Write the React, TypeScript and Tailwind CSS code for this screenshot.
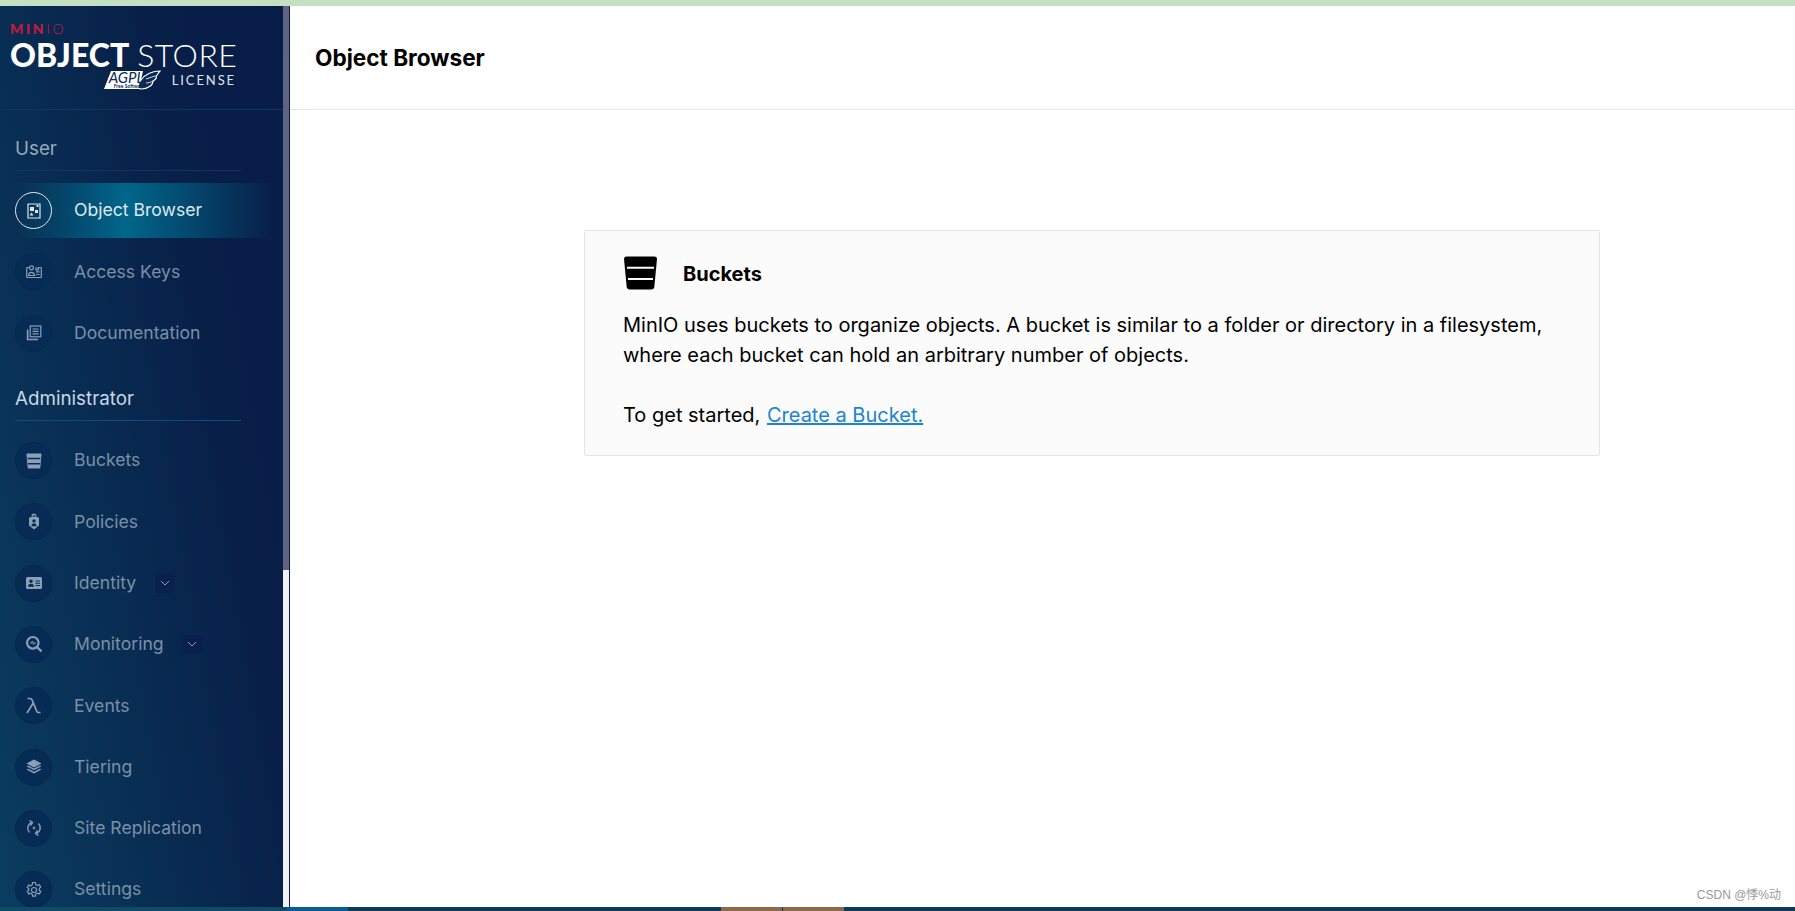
import type { ReactNode } from "react";

function Svg({ children }: { children: ReactNode }) {
  return (
    <svg width="18" height="18" viewBox="0 0 18 18" fill="none" stroke="currentColor" strokeWidth="1.2">
      {children}
    </svg>
  );
}

const BrowserIcon = (
  <svg width="14" height="16" viewBox="0 0 14 16" fill="#dfe7ee">
    <path d="M1 1h12v14H1z" fill="none" stroke="#dfe7ee" strokeWidth="1.2" />
    <rect x="3" y="4" width="4" height="4" />
    <rect x="8" y="7" width="3" height="3" />
    <path d="M4.5 9.5l2 3h-4z" />
    <rect x="9.5" y="2" width="2" height="2" />
  </svg>
);

const KeysIcon = (
  <Svg>
    <path d="M4.500 4.500H2.500a.8.8 0 00-.8.8v8.400a.8.8 0 00.8.8h13a.8.8 0 00.8-.8V5.300a.8.8 0 00-.8-.8h-2" />
    <circle cx="6.500" cy="4.800" r="2" />
    <path d="M3.400 12.500c.3-2.400 1.600-3.200 3.100-3.200s2.800.8 3.100 3.200z" />
    <path d="M11 5h2.500v2H11zM11 8.800h3.500M11 11.500h3.500" />
  </Svg>
);

const DocsIcon = (
  <Svg>
    <rect x="5.200" y="2" width="10.600" height="10.800" />
    <path d="M7.500 5h6M7.500 7.400h6M7.500 9.800h6" />
    <path d="M2.600 5.500v10h10.500" strokeWidth="1.600" />
  </Svg>
);

const BucketIcon = (
  <svg width="16" height="16" viewBox="0 0 35 34">
    <path
      d="M1 3C1 1.500 2 .500 3.500 .500h28C33 .500 34 1.500 34 3l-2.700 28c-.2 1.500-1.300 2.500-2.800 2.500h-22c-1.500 0-2.600-1-2.800-2.500z"
      fill="currentColor"
    />
    <path d="M3.500 11.500h28M4.500 23h26" stroke="#062c55" strokeWidth="3" />
  </svg>
);

const PolicyIcon = (
  <svg width="18" height="18" viewBox="0 0 18 18" fill="currentColor">
    <path d="M6.500 3.600V3a2.500 2.500 0 015 0v.6H10V3a1 1 0 00-2 0v.6z" />
    <path
      fillRule="evenodd"
      d="M4 4.500l5-1 5 1v8L9 16.600 4 12.500zM9 6.200a1.700 1.700 0 100 3.400 1.700 1.700 0 000-3.400zM6.400 13.300h5.200c0-1.800-1.200-3-2.600-3s-2.600 1.200-2.600 3z"
    />
  </svg>
);

const IdentityIcon = (
  <svg width="18" height="18" viewBox="0 0 18 18" fill="currentColor">
    <path
      fillRule="evenodd"
      d="M2.500 3h13A1.500 1.500 0 0117 4.500v9a1.500 1.500 0 01-1.500 1.500h-13A1.500 1.500 0 011 13.500v-9A1.500 1.500 0 012.500 3zM6 5.500a1.800 1.800 0 100 3.600 1.800 1.800 0 000-3.600zM3 12.800h6c0-1.800-1.300-3-3-3s-3 1.200-3 3zM10.500 6.500v1h4.500v-1zM10.500 8.800v1h4.500v-1zM10.500 11.100v1h4.500v-1z"
    />
  </svg>
);

const MonitoringIcon = (
  <Svg>
    <circle cx="7.800" cy="7.800" r="5.800" strokeWidth="2.200" />
    <path d="M12 12l4.500 4.500" strokeWidth="2.400" />
    <path d="M5 8h1.500l1-2 1 3.500.8-1.500H11" strokeWidth="1" />
  </Svg>
);

const LambdaIcon = (
  <Svg>
    <path d="M2.500 1.500h2.500c1.200 0 1.800.6 2.300 1.800l4.500 11c.4.900.9 1.200 2 1.200h1.700M8 6.500L2 16" strokeWidth="1.700" />
  </Svg>
);

const TieringIcon = (
  <svg width="18" height="18" viewBox="0 0 18 18" fill="currentColor">
    <path d="M9 1.500l7.500 4L9 9.500l-7.500-4z" />
    <path d="M1.500 8.300L3.200 7.500 9 10.600l5.800-3.100 1.700.8-7.500 4z" />
    <path d="M1.500 11.500l1.700-.8L9 13.800l5.800-3.100 1.700.8-7.500 4z" />
  </svg>
);

const ReplicationIcon = (
  <Svg>
    <path d="M6.500 3.500A6.200 6.200 0 004.500 13.500" strokeWidth="1.400" />
    <path d="M4.500 1.500l3 2-2 3" strokeWidth="1.400" />
    <path d="M11.500 14.500A6.200 6.200 0 0013.500 4.500" strokeWidth="1.400" />
    <path d="M13.500 16.500l-3-2 2-3" strokeWidth="1.400" />
    <path d="M7.500 9h3M9 7.500v3" strokeWidth="1" />
  </Svg>
);

const SettingsIcon = (
  <Svg>
    <circle cx="9" cy="9" r="2.500" />
    <path d="M7.600 1.500h2.800l.4 2 1.600.9 1.900-.7 1.400 2.400-1.500 1.300v1.800l1.500 1.300-1.400 2.400-1.900-.7-1.600.9-.4 2H7.600l-.4-2-1.600-.9-1.900.7-1.400-2.400 1.500-1.300V7.800L2.300 6.500l1.400-2.400 1.900.7 1.600-.9z" />
  </Svg>
);

const Chevron = (
  <span className="flex h-[19px] w-[19px] items-center justify-center rounded-[2px] bg-[#091f4c]">
    <svg width="10" height="6" viewBox="0 0 10 6" fill="none" stroke="#8ba0b6" strokeWidth="1">
      <path d="M1 1l4 4 4-4" />
    </svg>
  </span>
);

function NavItem({ icon, label, active, more }: { icon: ReactNode; label: string; active?: boolean; more?: boolean }) {
  return (
    <div className="flex h-[61.3px] items-center">
      <div
        className={`ml-[15px] flex h-[55px] w-[260px] items-center ${
          active ? "bg-[linear-gradient(90deg,rgba(0,102,138,0)_0%,#00668a_42%,rgba(0,102,138,0)_100%)]" : ""
        }`}
      >
        <div
          className={`flex h-[37px] w-[37px] items-center justify-center rounded-full ${
            active ? "border border-[#dfe7ee] text-[#dfe7ee]" : "border border-[#05274c] bg-[#062c55] text-[#8ba0b6]"
          }`}
        >
          {icon}
        </div>
        <span className={`ml-[22px] text-[17.6px] ${active ? "text-[#dfe9f0]" : "text-[#7a90a8]"}`}>{label}</span>
        {more && <span className="ml-[19px]">{Chevron}</span>}
      </div>
    </div>
  );
}

function SectionTitle({ label, height, light }: { label: string; height: string; light?: boolean }) {
  return (
    <div className={`mx-[15px] mb-[9px] flex w-[226px] items-end border-b pb-[8px] ${height} ${light ? "border-[#134a78]" : "border-[#12355f]"}`}>
      <span className={`text-[18.800px] leading-[26px] ${light ? "text-[#c9d8e6]" : "text-[#93a9bf]"}`}>{label}</span>
    </div>
  );
}

function Logo() {
  return (
    <div className="h-[104px] shrink-0 border-b border-[#12355f] pl-[10px] pt-[15px] font-['Lato',sans-serif] text-white">
      <div className="h-[15px] text-[14px] leading-[15px] tracking-[2.600px] text-[#c8193f]">
        <span className="font-black">MIN</span>
        <span className="font-light">IO</span>
      </div>
      <div className="mt-[3px] h-[31px] whitespace-nowrap text-[32px] leading-[31px]">
        <span className="font-black">OBJECT</span>
        <span className="ml-[8px] font-light tracking-[0.5px]">STORE</span>
      </div>
      <div className="flex w-[226px] items-center justify-end">
        <div className="relative mr-[11px] h-[20px] w-[57px]">
          <svg width="57" height="20" viewBox="0 0 57 20" className="absolute left-0 top-0">
            <path d="M7 1h32l-4 18H0z" fill="#fff" />
            <path d="M37 10c4-6 12-9 19-9-2 2-2 4-4 5 1 2-1 4-3 5 0 4-5 8-12 8-4 0-4-5 0-9z" fill="#0c2a52" stroke="#fff" strokeWidth="1.200" />
            <path d="M42 9c3-1 6-2 9-3M42 13c3 0 5-1 7-2" stroke="#fff" strokeWidth="0.8" fill="none" />
          </svg>
          <span className="absolute left-[5px] top-[1px] text-[15px] font-normal italic leading-[12px] text-[#0c2a52]">AGPL</span>
          <span className="absolute left-[10px] top-[14px] whitespace-nowrap text-[5px] font-bold leading-[5px] text-[#0c2a52]">Free Software</span>
        </div>
        <span className="text-[13px] leading-[20px] tracking-[1.900px] text-[#dfe7ee]">LICENSE</span>
      </div>
    </div>
  );
}

export default function App() {
  return (
    <div className="relative flex h-screen flex-col overflow-hidden bg-white font-['Inter',sans-serif]">
      <div className="h-[6px] shrink-0 bg-[#c5dfc3]" />

      <div className="flex min-h-0 flex-1">
        {/* sidebar */}
        <aside className="w-[283px] shrink-0 overflow-hidden bg-[linear-gradient(80deg,#0a3d5e_0%,#081f48_70%,#081c48_100%)]">
          <Logo />
          <SectionTitle label="User" height="h-[61px]" />
          <NavItem icon={BrowserIcon} label="Object Browser" active />
          <NavItem icon={KeysIcon} label="Access Keys" />
          <NavItem icon={DocsIcon} label="Documentation" />
          <SectionTitle label="Administrator" height="h-[57px]" light />
          <NavItem icon={BucketIcon} label="Buckets" />
          <NavItem icon={PolicyIcon} label="Policies" />
          <NavItem icon={IdentityIcon} label="Identity" more />
          <NavItem icon={MonitoringIcon} label="Monitoring" more />
          <NavItem icon={LambdaIcon} label="Events" />
          <NavItem icon={TieringIcon} label="Tiering" />
          <NavItem icon={ReplicationIcon} label="Site Replication" />
          <NavItem icon={SettingsIcon} label="Settings" />
        </aside>

        {/* scrollbar */}
        <div className="flex w-[6px] shrink-0 flex-col bg-[#f1f1f1]">
          <div className="h-[564px] bg-[#5f6580]" />
        </div>
        <div className="w-[1px] shrink-0 bg-[#0a1c4a]" />

        {/* main */}
        <main className="min-w-0 flex-1">
          <div className="flex h-[104px] items-center border-b border-[#e5e5e5] pl-[25px]">
            <h1 className="text-[22.600px] font-bold text-black">Object Browser</h1>
          </div>
          <div className="ml-[294px] mt-[120px] h-[226px] w-[1016px] rounded-[2px] border border-[#e5e5e5] bg-[#fbfbfb] pl-[38px] pt-[24px] text-[20px] leading-[30px] text-black">
            <div className="flex h-[35px] items-center">
              <BucketTitleIcon />
              <span className="ml-[25px] mt-[2px] font-bold">Buckets</span>
            </div>
            <p className="mt-[20px]">
              MinIO uses buckets to organize objects. A bucket is similar to a folder or directory in a filesystem,
              <br />
              where each bucket can hold an arbitrary number of objects.
            </p>
            <p className="mt-[30px]">
              To get started, <a className="ml-[1px] text-[#1c84d0] underline">Create a Bucket.</a>
            </p>
          </div>
        </main>
      </div>

      <div className="flex h-[4px] shrink-0 bg-[#0e3a58]">
        <div className="w-[287px] bg-[#0f4a66]" />
        <div className="w-[61px] bg-[#0a5a96]" />
        <div className="w-[373px]" />
        <div className="w-[61px] bg-[#8a6a4a]" />
        <div className="w-[1px] bg-[#0e3a58]" />
        <div className="w-[61px] bg-[#8a6a4a]" />
      </div>

      <span className="absolute bottom-[7px] right-[14px] font-['Liberation_Sans','Noto_Sans_CJK_SC',sans-serif] text-[12px] text-[#9a9a9a]">
        CSDN @悸%动
      </span>
    </div>
  );
}

function BucketTitleIcon() {
  return (
    <svg width="35" height="34" viewBox="0 0 35 34">
      <path d="M1 3C1 1.500 2 .500 3.500 .500h28C33 .500 34 1.500 34 3l-2.700 28c-.2 1.500-1.300 2.500-2.800 2.500h-22c-1.500 0-2.600-1-2.800-2.500z" fill="#000" />
      <path d="M4 11.700h27M5 23h25" stroke="#fbfbfb" strokeWidth="2" />
    </svg>
  );
}
